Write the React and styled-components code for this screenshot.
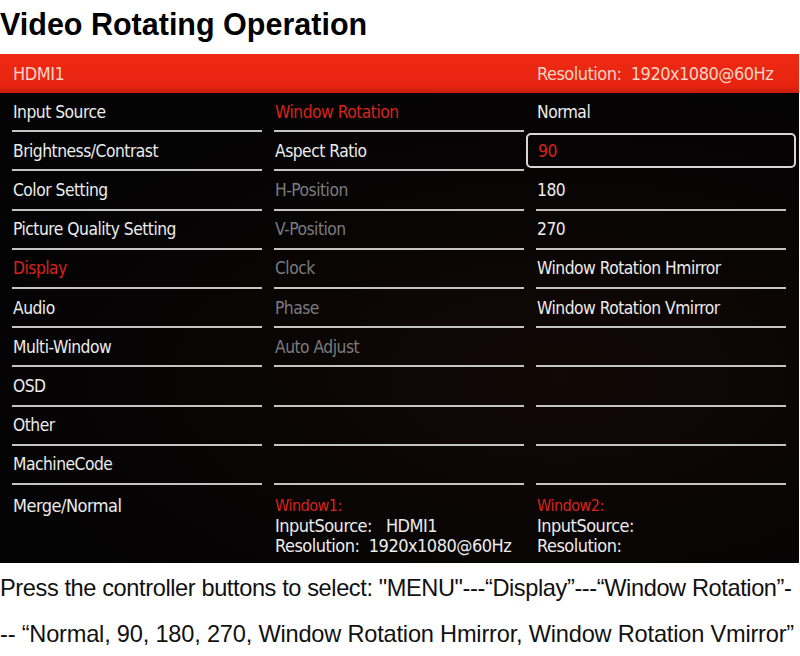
import React from "react";
import styled, { createGlobalStyle } from "styled-components";

const Global = createGlobalStyle`
  html, body { margin: 0; padding: 0; background: #fff; }
  body { font-family: "Liberation Sans", Arial, sans-serif; }
`;

const Page = styled.div`
  width: 800px;
  height: 656px;
  display: flex;
  flex-direction: column;
  background: #fff;
  overflow: hidden;
`;

const Title = styled.h1`
  margin: 0;
  height: 54px;
  flex: none;
  padding: 6px 0 0 0;
  box-sizing: border-box;
  font-family: "Liberation Sans", Arial, sans-serif;
  font-weight: 700;
  font-size: 30.5px;
  line-height: 36px;
  color: #000;
`;

const Osd = styled.section`
  width: 799px;
  flex: none;
  font-family: "DejaVu Sans Condensed", "DejaVu Sans", sans-serif;
  font-stretch: condensed;
  font-size: 17.3px;
  letter-spacing: -0.5px;
  color: #ececec;
`;

const HeaderBar = styled.div`
  height: 39px;
  display: grid;
  grid-template-columns: 250px 250px 250px;
  column-gap: 12px;
  padding: 0 13px 0 13px;
  align-items: center;
  background: linear-gradient(180deg, #ef2a14 0%, #e8230f 82%, #c81d0c 100%);
  color: #f6d4c6;
  font-size: 18px;
`;

const HeaderText = styled.span`
  grid-column: ${(p) => p.$col};
  white-space: nowrap;
`;

const Body = styled.div`
  background: radial-gradient(ellipse at 70% 60%, #120806 0%, #060404 55%, #030303 100%);
  padding: 0 13px 0 12px;
  height: 470px;
  box-sizing: border-box;
  display: grid;
  grid-template-columns: 250px 250px 250px;
  column-gap: 12px;
`;

const Column = styled.div`
  display: flex;
  flex-direction: column;
`;

const Item = styled.div`
  height: 39.2px;
  flex: none;
  box-sizing: border-box;
  display: flex;
  align-items: center;
  padding-left: 1px;
  white-space: nowrap;
  border-bottom: 2px solid ${(p) => (p.$noRule ? "transparent" : "#c4c4c4")};
  color: ${(p) =>
    p.$tone === "active" ? "#d8231b" : p.$tone === "dim" ? "#7c7c7c" : "#ececec"};
`;

const Selected = styled.div`
  height: 35px;
  flex: none;
  margin: 1px -10px 3.2px -10px;
  box-sizing: border-box;
  border: 2px solid #d6d6d6;
  border-radius: 5px;
  display: flex;
  align-items: center;
  padding-left: 10px;
  color: #d8231b;
`;

const Footer = styled.div`
  padding-top: 11px;
  padding-left: 1px;
  display: flex;
  flex-direction: column;
  line-height: 20px;
  white-space: nowrap;
`;

const Label = styled.span`
  color: ${(p) => (p.$red ? "#d8231b" : "#ececec")};
  font-size: ${(p) => (p.$red ? "16px" : "18px")};
`;

const Notes = styled.div`
  padding-top: 2px;
`;

const Note = styled.p`
  margin: 0;
  font-family: "Liberation Sans", Arial, sans-serif;
  font-size: 23.6px;
  line-height: 46px;
  color: #111;
  white-space: nowrap;
  letter-spacing: ${(p) => (p.$tight ? "-0.4px" : "-0.2px")};
`;

const menu = [
  { t: "Input Source" },
  { t: "Brightness/Contrast" },
  { t: "Color Setting" },
  { t: "Picture Quality Setting" },
  { t: "Display", tone: "active" },
  { t: "Audio" },
  { t: "Multi-Window" },
  { t: "OSD" },
  { t: "Other" },
  { t: "MachineCode" },
];

const sub = [
  { t: "Window Rotation", tone: "active" },
  { t: "Aspect Ratio" },
  { t: "H-Position", tone: "dim" },
  { t: "V-Position", tone: "dim" },
  { t: "Clock", tone: "dim" },
  { t: "Phase", tone: "dim" },
  { t: "Auto Adjust", tone: "dim" },
  { t: "" },
  { t: "" },
  { t: "" },
];

const options = [
  "Normal",
  "90",
  "180",
  "270",
  "Window Rotation Hmirror",
  "Window Rotation Vmirror",
  "",
  "",
  "",
  "",
];

const SELECTED = 1;

export default function App() {
  return (
    <Page>
      <Global />
      <Title>Video Rotating Operation</Title>
      <Osd>
        <HeaderBar>
          <HeaderText $col={1}>HDMI1</HeaderText>
          <HeaderText $col={3}>Resolution:&nbsp; 1920x1080@60Hz</HeaderText>
        </HeaderBar>
        <Body>
          <Column>
            {menu.map((m, i) => (
              <Item key={i} $tone={m.tone}>
                {m.t}
              </Item>
            ))}
            <Footer>
              <Label>Merge/Normal</Label>
            </Footer>
          </Column>
          <Column>
            {sub.map((s, i) => (
              <Item key={i} $tone={s.tone}>
                {s.t}
              </Item>
            ))}
            <Footer>
              <Label $red>Window1:</Label>
              <Label>InputSource:&nbsp;&nbsp; HDMI1</Label>
              <Label>Resolution:&nbsp; 1920x1080@60Hz</Label>
            </Footer>
          </Column>
          <Column>
            {options.map((o, i) =>
              i === SELECTED ? (
                <Selected key={i}>{o}</Selected>
              ) : (
                <Item key={i} $noRule={i === SELECTED - 1}>
                  {o}
                </Item>
              )
            )}
            <Footer>
              <Label $red>Window2:</Label>
              <Label>InputSource:</Label>
              <Label>Resolution:</Label>
            </Footer>
          </Column>
        </Body>
      </Osd>
      <Notes>
        <Note $tight>
          Press the controller buttons to select: "MENU"---“Display”---“Window Rotation”-
        </Note>
        <Note>-- “Normal, 90, 180, 270, Window Rotation Hmirror, Window Rotation Vmirror”</Note>
      </Notes>
    </Page>
  );
}
